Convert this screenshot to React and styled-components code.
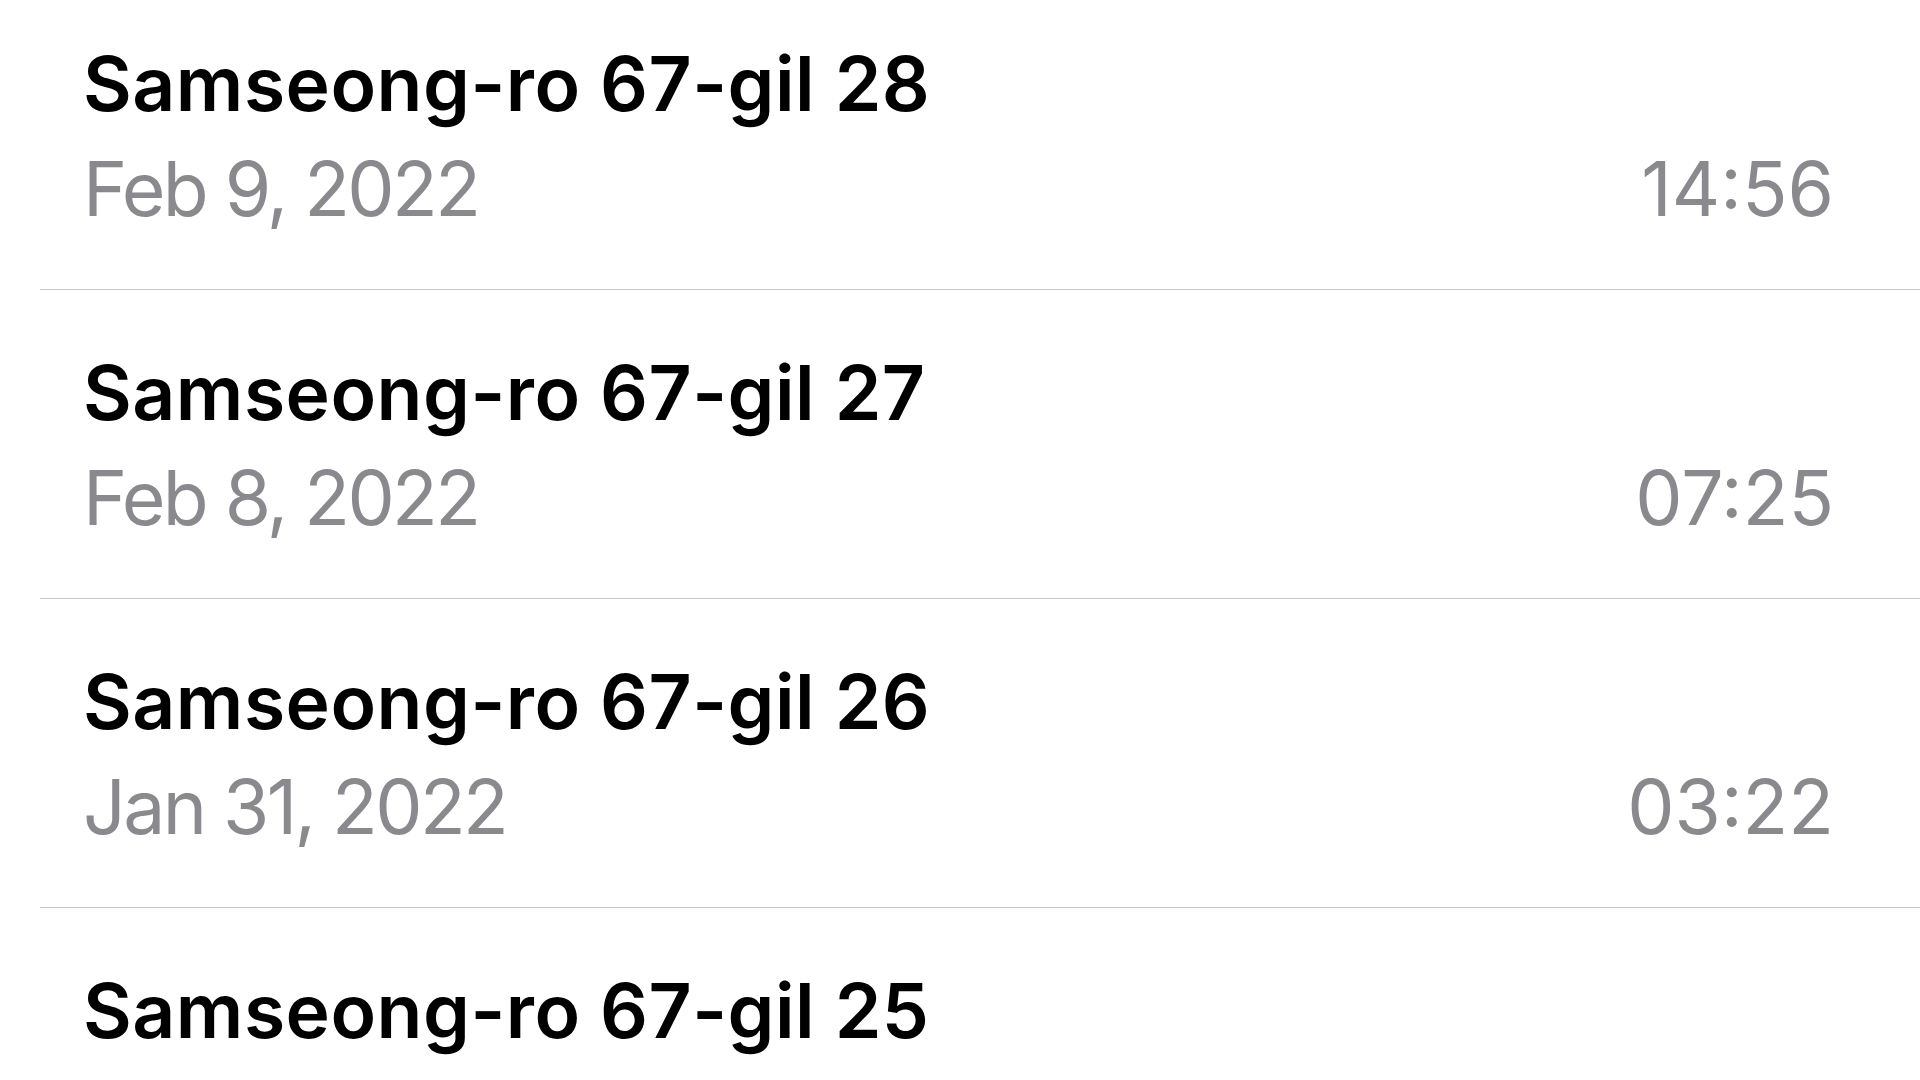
import React from 'react'
import styled, { createGlobalStyle } from 'styled-components'

const GlobalStyle = createGlobalStyle`
  html, body {
    margin: 0;
    padding: 0;
    background: #fff;
  }
  body {
    font-family: 'Inter', 'Liberation Sans', sans-serif;
    -webkit-font-smoothing: antialiased;
  }
`

const Screen = styled.div`
  width: 100%;
  height: 100vh;
  overflow: hidden;
  background: #fff;
`

const List = styled.ul`
  list-style: none;
  margin: -19px 0 0 40px;
  padding: 0;
`

const Row = styled.li`
  padding: 50px 86px 48px 43px;
  border-bottom: 1px solid #c8c8ca;
`

const Title = styled.div`
  font-size: 75px;
  line-height: 105px;
  font-weight: 600;
  letter-spacing: 0.5px;
  color: #000;
  white-space: nowrap;
`

const Meta = styled.div`
  display: flex;
  justify-content: space-between;
  align-items: baseline;
  font-size: 75px;
  line-height: 105px;
  font-weight: 400;
  color: #8a8a8e;
`

const DateText = styled.span`
  letter-spacing: -2.6px;
`

const TimeText = styled.span`
  letter-spacing: 0;
`

const recents = [
  { title: 'Samseong-ro 67-gil 28', date: 'Feb 9, 2022', time: '14:56' },
  { title: 'Samseong-ro 67-gil 27', date: 'Feb 8, 2022', time: '07:25' },
  { title: 'Samseong-ro 67-gil 26', date: 'Jan 31, 2022', time: '03:22' },
  { title: 'Samseong-ro 67-gil 25' },
]

const App = () => {
  return (
    <Screen>
      <GlobalStyle />
      <List>
        {recents.map((item) => (
          <Row key={item.title}>
            <Title>{item.title}</Title>
            {item.date && (
              <Meta>
                <DateText>{item.date}</DateText>
                <TimeText>{item.time}</TimeText>
              </Meta>
            )}
          </Row>
        ))}
      </List>
    </Screen>
  )
}

export default App
